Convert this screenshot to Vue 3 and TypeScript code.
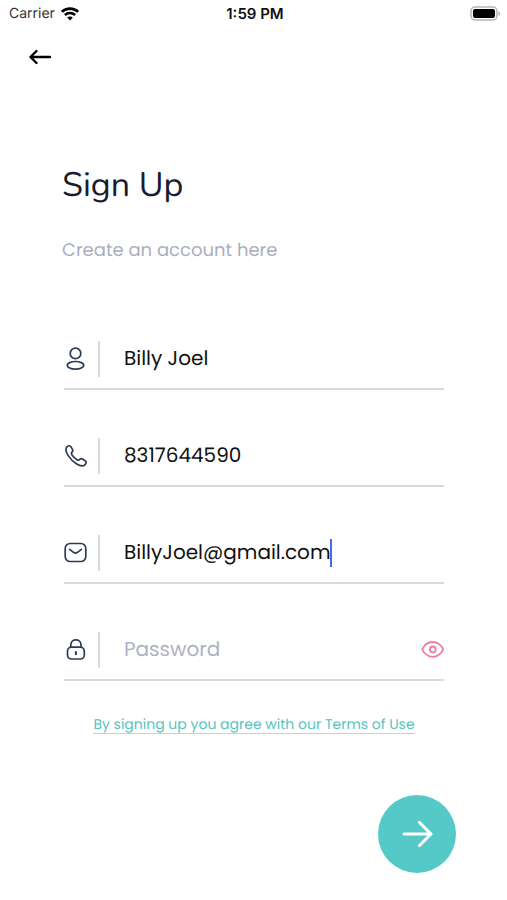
<script setup lang="ts">
import { reactive, ref } from 'vue'

type FieldName = 'name' | 'phone' | 'email' | 'password'

interface Field {
  name: FieldName
  label: string
  type: string
}

const fields: Field[] = [
  { name: 'name', label: 'Full name', type: 'text' },
  { name: 'phone', label: 'Mobile number', type: 'tel' },
  { name: 'email', label: 'Email address', type: 'text' },
  { name: 'password', label: 'Password', type: 'password' },
]

const values = reactive<Record<FieldName, string>>({
  name: 'Billy Joel',
  phone: '8317644590',
  email: 'BillyJoel@gmail.com',
  password: '',
})

const active = ref<FieldName>('email')
const revealed = ref(false)

function inputType(field: Field): string {
  return field.name === 'password' && revealed.value ? 'text' : field.type
}
</script>

<template>
  <div class="screen">
    <header class="status">
      <span class="carrier">
        Carrier
        <svg class="wifi" viewBox="0 0 18 14" aria-hidden="true">
          <path d="M0.8 4.9C5.2 0.5 12.8 0.5 17.2 4.9" />
          <path d="M3.9 8C6.7 5.3 11.3 5.3 14.1 8" />
          <path class="dot" d="M6.2 10.5C7.8 9 10.2 9 11.8 10.5L9 13.4Z" />
        </svg>
      </span>
      <time class="clock">1:59 PM</time>
      <svg class="battery" viewBox="0 0 31 15" aria-hidden="true">
        <rect class="shell" x="1" y="1" width="26" height="13" rx="4" />
        <rect x="3" y="3" width="22" height="9" rx="2" />
        <path class="tip" d="M28.5 5.2C30.6 5.8 30.6 9.2 28.5 9.8Z" />
      </svg>
    </header>

    <nav class="nav">
      <button class="back" type="button" aria-label="Back">
        <svg viewBox="0 0 24 18" aria-hidden="true">
          <path d="M22 9H2.5M8.5 3L2.5 9L8.5 15" />
        </svg>
      </button>
    </nav>

    <main class="content">
      <h1 class="title">Sign Up</h1>
      <p class="subtitle">Create an account here</p>

      <form class="form" @submit.prevent>
        <div v-for="field in fields" :key="field.name" class="field">
          <label class="icon" :for="field.name" :aria-label="field.label">
            <svg v-if="field.name === 'name'" viewBox="0 0 24 24" aria-hidden="true">
              <circle cx="11.5" cy="6.4" r="5.3" />
              <ellipse cx="11.5" cy="18.3" rx="8.3" ry="3.8" />
            </svg>
            <svg v-else-if="field.name === 'phone'" viewBox="0 0 24 24" aria-hidden="true">
              <path d="M2.9 2.9C4 1.6 5.6 1.3 6.7 2.5L8.5 5.4C9.2 6.6 8.6 7.5 7.8 8.3C7.1 9.1 7.2 9.7 8 11C9.4 13 11.1 14.6 13 15.7C14.2 16.4 14.9 16.3 15.6 15.5C16.4 14.7 17.3 14.3 18.4 15L21.4 17C22.7 18 22.1 19.7 20.9 20.8C18.7 22.8 16.1 22.1 12.7 20C9.3 17.8 6.1 14.6 3.9 11.1C1.9 7.9 1.1 5.1 2.9 2.9Z" />
            </svg>
            <svg v-else-if="field.name === 'email'" viewBox="0 0 24 24" aria-hidden="true">
              <rect x="1.2" y="2.5" width="20.6" height="18" rx="5" />
              <path d="M5.6 8.3L9.5 11.3C10.9 12.3 12.1 12.3 13.5 11.3L17.4 8.3" />
            </svg>
            <svg v-else viewBox="0 0 24 24" aria-hidden="true">
              <rect x="3.5" y="9.2" width="16.8" height="11.8" rx="4" />
              <path d="M6.8 9V6.9C6.8 0.1 17 0.1 17 6.9V9" />
              <path class="keyhole" d="M11.9 13.9V16.3" />
            </svg>
          </label>
          <span class="divider"></span>
          <input
            :id="field.name"
            v-model="values[field.name]"
            class="input"
            :class="{ fitted: field.name === active }"
            :type="inputType(field)"
            :placeholder="field.label"
            autocomplete="off"
            spellcheck="false"
            @focus="active = field.name"
          />
          <span v-if="field.name === active" class="caret"></span>
          <button
            v-if="field.name === 'password'"
            class="reveal"
            type="button"
            aria-label="Show password"
            :aria-pressed="revealed"
            @click="revealed = !revealed"
          >
            <svg viewBox="0 0 24 20" aria-hidden="true">
              <path d="M2.2 9.4C4.2 5 8.5 2 12.8 2S21.4 5 23.2 9.4C21.4 13.8 17 16.8 12.8 16.8S4.2 13.8 2.2 9.4Z" />
              <circle cx="12.8" cy="9.4" r="2.9" />
            </svg>
          </button>
        </div>

        <a class="terms" href="#terms">By signing up you agree with our Terms of Use</a>

        <button class="next" type="submit" aria-label="Continue">
          <svg viewBox="0 0 32 28" aria-hidden="true">
            <path d="M3 14H30M18.5 2.5L30 14L18.5 25.5" />
          </svg>
        </button>
      </form>
    </main>
  </div>
</template>

<style>
body {
  background: #fff;
}
</style>

<style scoped>
.screen {
  font-family: Poppins, Inter, 'Open Sans', sans-serif;
  color: #111;
  text-rendering: geometricPrecision;
}

svg {
  display: block;
  fill: none;
  stroke: currentColor;
  stroke-linecap: round;
  stroke-linejoin: round;
}

button {
  padding: 0;
  border: 0;
  background: none;
  cursor: pointer;
}

.status {
  display: grid;
  grid-template-columns: 1fr auto 1fr;
  align-items: center;
  height: 27px;
  padding: 0 6px 0 9px;
  font-family: Inter, sans-serif;
  font-size: 14px;
}

.carrier {
  display: flex;
  align-items: center;
  gap: 6px;
  color: #333;
}

.wifi {
  width: 18px;
  height: 14px;
  color: #000;
  stroke-width: 2.6;
  stroke-linecap: butt;
}

.wifi .dot {
  fill: currentColor;
  stroke: none;
}

.clock {
  font-size: 15px;
  font-weight: 600;
}

.battery {
  justify-self: end;
  width: 31px;
  height: 15px;
  fill: #000;
  stroke: none;
}

.battery .shell {
  fill: none;
  stroke: #b5b5b5;
  stroke-width: 1.5;
}

.battery .tip {
  fill: #b5b5b5;
}

.nav {
  display: flex;
  padding: 21px 28px 0;
}

.back {
  color: #000;
}

.back svg {
  width: 24px;
  height: 18px;
  stroke-width: 2.4;
}

.content {
  padding: 96px 63px 24px 64px;
}

.title {
  margin: 0 -2px;
  font-family: Nunito, 'Open Sans', sans-serif;
  font-size: 34px;
  font-weight: 400;
  line-height: 48px;
  color: #181d2d;
}

.subtitle {
  margin: 29px -2px 0;
  font-size: 18px;
  line-height: 24px;
  color: #aaafbd;
}

.form {
  display: flex;
  flex-direction: column;
  gap: 48px;
  margin-top: 78px;
}

.field {
  display: flex;
  align-items: center;
  height: 36px;
  padding-bottom: 11px;
  border-bottom: 2px solid #d8dadd;
}

.icon {
  flex: none;
  color: #2d3b52;
}

.icon svg {
  width: 24px;
  height: 24px;
  stroke-width: 1.7;
}

.icon .keyhole {
  stroke-width: 2;
}

.divider {
  flex: none;
  width: 2px;
  height: 36px;
  margin: 0 24px 0 10px;
  background: #d8dadd;
}

.input {
  flex: 1;
  min-width: 0;
  height: 36px;
  padding: 0 0 2px;
  border: 0;
  outline: 0;
  background: none;
  font-family: inherit;
  font-size: 20px;
  color: #111;
  caret-color: transparent;
  text-rendering: inherit;
}

.input::placeholder {
  color: #aeb2c2;
  opacity: 1;
}

.input.fitted {
  flex: 0 1 auto;
  field-sizing: content;
}

.caret {
  flex: none;
  width: 2px;
  height: 28px;
  background: #426bea;
}

.reveal {
  flex: none;
  color: #f27ba4;
}

.reveal svg {
  width: 24px;
  height: 20px;
  stroke-width: 1.8;
}

.terms {
  align-self: center;
  margin-top: -14px;
  border-bottom: 1px solid #a3e2df;
  font-size: 14px;
  line-height: 18px;
  color: #55c4c1;
  text-decoration: none;
}

.next {
  display: grid;
  place-items: center;
  align-self: flex-end;
  width: 78px;
  height: 78px;
  margin: 13px -12px 0 0;
  border-radius: 50%;
  background: #54c9c8;
  color: #fff;
}

.next svg {
  width: 32px;
  height: 28px;
  stroke-width: 3;
}
</style>
